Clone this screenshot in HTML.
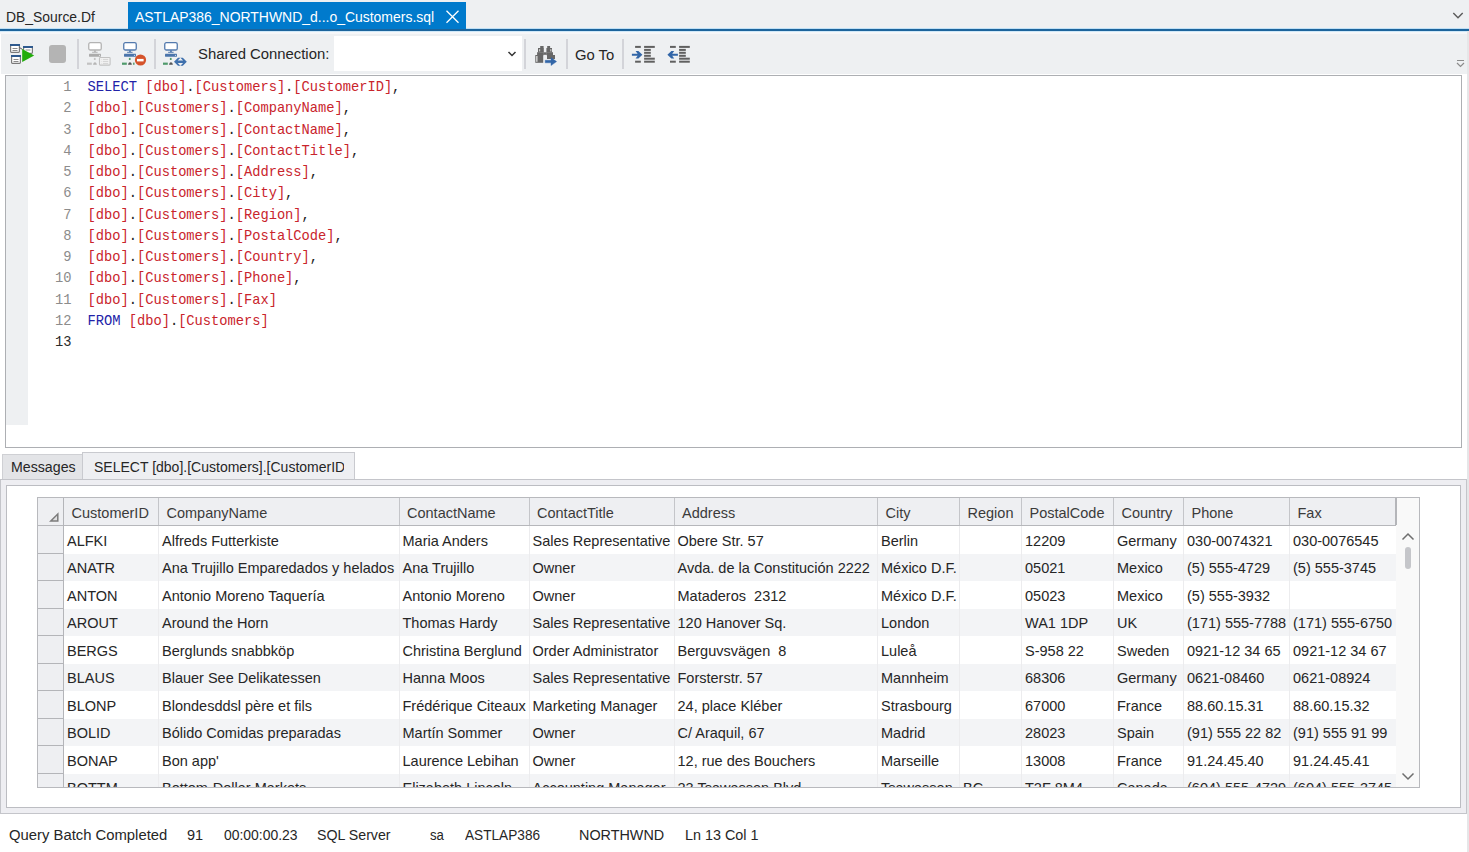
<!DOCTYPE html><html><head><meta charset="utf-8"><title>SQL Query</title><style>
html,body{margin:0;padding:0;}
body{width:1469px;height:852px;position:relative;overflow:hidden;background:#ffffff;font-family:"Liberation Sans",sans-serif;}
div{box-sizing:border-box;}
svg{display:block;}
.t{position:absolute;white-space:pre;}
</style></head><body>
<div style="position:absolute;left:0px;top:0px;width:1469px;height:29px;background:#eef0f2;"></div>
<div style="position:absolute;left:0px;top:28px;width:1469px;height:1px;background:#bfe0f6;"></div>
<div class="t" id="x1" style="left:6.00px;top:9px;height:15px;font-size:15.5px;line-height:15.5px;color:#262626;font-family:'Liberation Sans',sans-serif;transform:scaleX(0.8970);transform-origin:0 0;">DB_Source.Df</div>
<div style="position:absolute;left:128px;top:2px;width:338px;height:27px;background:#007acc;"></div>
<div class="t" id="x2" style="left:135.00px;top:9px;height:15px;font-size:15.5px;line-height:15.5px;color:#ffffff;font-family:'Liberation Sans',sans-serif;transform:scaleX(0.9003);transform-origin:0 0;">ASTLAP386_NORTHWND_d...o_Customers.sql</div>
<svg style="position:absolute;left:445px;top:10px" width="15" height="14" viewBox="0 0 15 14"><path d="M1.5 0.8 L13.5 12.8 M13.5 0.8 L1.5 12.8" stroke="#ffffff" stroke-width="1.3" fill="none"/></svg>
<svg style="position:absolute;left:1452px;top:11px" width="12" height="9" viewBox="0 0 12 9"><path d="M1.3 2 L6 6.8 L10.7 2" stroke="#5a5a5a" stroke-width="1.4" fill="none"/></svg>
<div style="position:absolute;left:0px;top:29px;width:1469px;height:2px;background:#1c649c;"></div>
<div style="position:absolute;left:0px;top:31px;width:1469px;height:1px;background:#cfe8f8;"></div>
<div style="position:absolute;left:0px;top:32px;width:1469px;height:2px;background:#f6f7f9;"></div>
<div style="position:absolute;left:1467px;top:31px;width:2px;height:821px;background:#e6e6e8;"></div>
<div style="position:absolute;left:1px;top:34px;width:1466px;height:40px;background:#eef0f2;"></div>
<svg style="position:absolute;left:9px;top:43px" width="27" height="22" viewBox="0 0 27 22">
<g fill="#fff" stroke="#7a7a7a" stroke-width="1.2">
<rect x="1.6" y="1.6" width="8.8" height="7.8" rx="0.8"/>
<rect x="14.6" y="3.6" width="8.8" height="6.8" rx="0.8"/>
<rect x="2.6" y="12.6" width="8.8" height="7.8" rx="0.8"/>
</g>
<g fill="#2f5a8e"><rect x="1" y="1" width="10" height="2"/><rect x="14" y="3" width="10" height="2"/><rect x="2" y="12" width="10" height="2"/></g>
<g stroke="#8a8a8a" stroke-width="1"><path d="M3.5 5.5h5M3.5 7.5h5M16.5 7h5M4.5 16.5h5M4.5 18.5h5"/></g>
<path d="M10.5 4.5 L13.5 6.5" stroke="#555" stroke-width="1"/>
<path d="M13.2 6 L25.2 12.5 L13.2 19 Z" fill="#22ad0c"/>
</svg>
<div style="position:absolute;left:49px;top:45px;width:17px;height:17.5px;background:#b4b4b4;border-radius:3px"></div>
<div style="position:absolute;left:76.5px;top:39px;width:2px;height:30px;background:#d3d4d9;"></div>
<div style="position:absolute;left:153.5px;top:39px;width:2px;height:30px;background:#d3d4d9;"></div>
<div style="position:absolute;left:523.5px;top:39px;width:2px;height:30px;background:#d3d4d9;"></div>
<div style="position:absolute;left:565.5px;top:39px;width:2px;height:30px;background:#d3d4d9;"></div>
<div style="position:absolute;left:621.5px;top:39px;width:2px;height:30px;background:#d3d4d9;"></div>
<svg style="position:absolute;left:83px;top:38px" width="32" height="30" viewBox="0 0 32 30"><rect x="5.75" y="4.65" width="12.5" height="7.35" rx="1.6" fill="#ffffff" stroke="#b3b3b3" stroke-width="1.3"/><rect x="11" y="12.3" width="1.9" height="1.6" fill="#b3b3b3"/><rect x="9.1" y="13.8" width="5.5" height="1" fill="#b3b3b3"/><rect x="6" y="15.8" width="12" height="2.9" rx="0.4" fill="#ababab"/><circle cx="16.5" cy="17.3" r="0.6" fill="#ffffff" opacity="0.8"/><rect x="10.9" y="19.9" width="1.7" height="2.1" fill="#c2c2c2"/><rect x="4" y="24.6" width="4.8" height="2.2" fill="#c2c2c2"/><path d="M10 26.8 L10.6 25 Q11.95 23.4 13.3 25 L13.9 26.8 Z" fill="#b5b5b5"/><rect x="16.5" y="19.5" width="10.6" height="7.6" rx="0.8" fill="#f3f3f3" stroke="#c2c2c2" stroke-width="1.1"/><path d="M20 21.4h5.2M20 23.4h5.2M20 25.4h5.2" stroke="#c9c9c9" stroke-width="0.8"/><path d="M18.4 21.4h0.8M18.4 23.4h0.8M18.4 25.4h0.8" stroke="#d5d5d5" stroke-width="0.8"/></svg>
<svg style="position:absolute;left:118px;top:38px" width="32" height="30" viewBox="0 0 32 30"><rect x="5.75" y="4.65" width="12.5" height="7.35" rx="1.6" fill="#ffffff" stroke="#5279ad" stroke-width="1.3"/><rect x="11" y="12.3" width="1.9" height="1.6" fill="#5279ad"/><rect x="9.1" y="13.8" width="5.5" height="1" fill="#5279ad"/><rect x="6" y="15.8" width="12" height="2.9" rx="0.4" fill="#4a74ab"/><circle cx="16.5" cy="17.3" r="0.6" fill="#ffffff" opacity="0.8"/><rect x="10.9" y="19.9" width="1.7" height="2.1" fill="#4f9a6b"/><rect x="4" y="24.6" width="4.8" height="2.2" fill="#4f9a6b"/><path d="M10 26.8 L10.6 25 Q11.95 23.4 13.3 25 L13.9 26.8 Z" fill="#555555"/><rect x="15.1" y="24.6" width="1.4" height="2.2" fill="#4f9a6b"/><circle cx="22.5" cy="22" r="5.6" fill="#d5532b"/><rect x="19" y="20.9" width="6.6" height="2.5" fill="#ffffff"/></svg>
<svg style="position:absolute;left:159px;top:38px" width="32" height="30" viewBox="0 0 32 30"><rect x="5.75" y="4.65" width="12.5" height="7.35" rx="1.6" fill="#ffffff" stroke="#5279ad" stroke-width="1.3"/><rect x="11" y="12.3" width="1.9" height="1.6" fill="#5279ad"/><rect x="9.1" y="13.8" width="5.5" height="1" fill="#5279ad"/><rect x="6" y="15.8" width="12" height="2.9" rx="0.4" fill="#4a74ab"/><circle cx="16.5" cy="17.3" r="0.6" fill="#ffffff" opacity="0.8"/><rect x="10.9" y="19.9" width="1.7" height="2.1" fill="#4f9a6b"/><rect x="4" y="24.6" width="4.8" height="2.2" fill="#4f9a6b"/><path d="M10 26.8 L10.6 25 Q11.95 23.4 13.3 25 L13.9 26.8 Z" fill="#555555"/><path d="M15 23.75 L19 19.7 L21.4 19.7 L18.7 22.6 H24.1 L21.4 19.7 H23.8 L27.8 23.75 L23.8 27.8 H21.4 L24.1 24.9 H18.7 L21.4 27.8 H19 Z" fill="#3f70ad"/></svg>
<div class="t" id="x3" style="left:198.00px;top:46px;height:15px;font-size:15.5px;line-height:15.5px;color:#262626;font-family:'Liberation Sans',sans-serif;transform:scaleX(0.9585);transform-origin:0 0;">Shared Connection:</div>
<div style="position:absolute;left:334px;top:36px;width:188px;height:35px;background:#ffffff;"></div>
<svg style="position:absolute;left:507px;top:50px" width="10" height="8" viewBox="0 0 10 8"><path d="M1.5 2 L5 5.5 L8.5 2" stroke="#333" stroke-width="1.5" fill="none"/></svg>
<svg style="position:absolute;left:530px;top:40px" width="32" height="28" viewBox="0 0 32 28">
<g fill="#676767">
<rect x="10.2" y="6" width="3.4" height="2.2"/>
<rect x="8" y="8" width="5.8" height="4.3"/>
<rect x="7.1" y="12.2" width="6.7" height="3"/>
<rect x="5.3" y="15" width="7.9" height="7.8"/>
<rect x="17.2" y="6" width="2.9" height="2.2"/>
<rect x="16.4" y="8" width="5.6" height="4.3"/>
<rect x="16.4" y="12.2" width="6.6" height="3"/>
<rect x="17" y="15" width="8" height="4"/>
<rect x="13.6" y="12.3" width="3" height="2.5"/>
</g>
<g fill="#c9c9c9"><rect x="6" y="16" width="1.6" height="5.8"/><rect x="9" y="9.2" width="1.2" height="2.2"/><rect x="20.2" y="9.2" width="1.2" height="2.2"/></g>
<path d="M15.2 20.3 H21 V17.6 L26.6 21.6 L21 25.6 V22.8 H15.2 Z" fill="#3266a8" stroke="#3266a8" stroke-width="0.4" stroke-linejoin="round"/>
</svg>
<div class="t" id="x4" style="left:575.00px;top:47px;height:15px;font-size:15.5px;line-height:15.5px;color:#262626;font-family:'Liberation Sans',sans-serif;transform:scaleX(0.9553);transform-origin:0 0;">Go To</div>
<svg style="position:absolute;left:628px;top:40px" width="32" height="28" viewBox="0 0 32 28">
<g fill="#606060"><rect x="7.1" y="5.9" width="5.7" height="2"/><rect x="7.1" y="20.7" width="5.7" height="2"/>
<rect x="16.1" y="5.9" width="10.7" height="2"/><rect x="16.1" y="8.9" width="6.7" height="2"/><rect x="16.1" y="11.8" width="6.7" height="2"/><rect x="16.1" y="14.8" width="6.7" height="2"/><rect x="16.1" y="17.7" width="10.7" height="2"/><rect x="16.1" y="20.7" width="10.7" height="2"/></g>
<path d="M3.9 13.8 H9.6 L7.6 11 H10.4 L14.4 14.8 L10.4 18.6 H7.6 L9.6 15.8 H3.9 Z" fill="#3266a8"/>
</svg>
<svg style="position:absolute;left:662px;top:40px" width="32" height="28" viewBox="0 0 32 28">
<g fill="#606060"><rect x="8" y="5.9" width="5.8" height="2"/><rect x="8" y="20.7" width="5.8" height="2"/>
<rect x="17.1" y="5.9" width="10.7" height="2"/><rect x="17.1" y="8.9" width="6.7" height="2"/><rect x="17.1" y="11.8" width="6.7" height="2"/><rect x="17.1" y="14.8" width="6.7" height="2"/><rect x="17.1" y="17.7" width="10.7" height="2"/><rect x="17.1" y="20.7" width="10.7" height="2"/></g>
<path d="M15.9 13.8 H10.2 L12.2 11 H9.4 L5.4 14.8 L9.4 18.6 H12.2 L10.2 15.8 H15.9 Z" fill="#3266a8"/>
</svg>
<svg style="position:absolute;left:1456px;top:59px" width="9" height="10" viewBox="0 0 9 10"><rect x="1" y="1" width="7" height="1" fill="#8c8c8c"/><path d="M1 4 L4.5 7.5 L8 4" stroke="#8c8c8c" stroke-width="1.2" fill="none"/></svg>
<div style="position:absolute;left:5px;top:75px;width:457px;height:0px;background:transparent;"></div>
<div style="position:absolute;left:5px;top:75px;width:1457px;height:373px;border:1px solid #adafb3;background:#fff"></div>
<div style="position:absolute;left:6px;top:76px;width:22px;height:349px;background:#eef0f2;"></div>
<div class="t" id="x5" style="left:63.27px;top:81px;height:13px;font-size:13.75px;line-height:13.75px;color:#8c8c8c;font-family:'Liberation Mono',monospace;letter-spacing:-0.020px">1</div>
<div class="t" id="x6" style="left:87.60px;top:81px;height:13px;font-size:13.75px;line-height:13.75px;color:#2222a8;font-family:'Liberation Mono',monospace;letter-spacing:-0.020px">SELECT </div>
<div class="t" id="x7" style="left:145.21px;top:81px;height:13px;font-size:13.75px;line-height:13.75px;color:#c9242c;font-family:'Liberation Mono',monospace;letter-spacing:-0.020px">[dbo]</div>
<div class="t" id="x8" style="left:186.36px;top:81px;height:13px;font-size:13.75px;line-height:13.75px;color:#222;font-family:'Liberation Mono',monospace;letter-spacing:-0.020px">.</div>
<div class="t" id="x9" style="left:194.59px;top:81px;height:13px;font-size:13.75px;line-height:13.75px;color:#c9242c;font-family:'Liberation Mono',monospace;letter-spacing:-0.020px">[Customers]</div>
<div class="t" id="x10" style="left:285.12px;top:81px;height:13px;font-size:13.75px;line-height:13.75px;color:#222;font-family:'Liberation Mono',monospace;letter-spacing:-0.020px">.</div>
<div class="t" id="x11" style="left:293.35px;top:81px;height:13px;font-size:13.75px;line-height:13.75px;color:#c9242c;font-family:'Liberation Mono',monospace;letter-spacing:-0.020px">[CustomerID]</div>
<div class="t" id="x12" style="left:392.11px;top:81px;height:13px;font-size:13.75px;line-height:13.75px;color:#222;font-family:'Liberation Mono',monospace;letter-spacing:-0.020px">,</div>
<div class="t" id="x13" style="left:63.27px;top:102px;height:13px;font-size:13.75px;line-height:13.75px;color:#8c8c8c;font-family:'Liberation Mono',monospace;letter-spacing:-0.020px">2</div>
<div class="t" id="x14" style="left:87.60px;top:102px;height:13px;font-size:13.75px;line-height:13.75px;color:#c9242c;font-family:'Liberation Mono',monospace;letter-spacing:-0.020px">[dbo]</div>
<div class="t" id="x15" style="left:128.75px;top:102px;height:13px;font-size:13.75px;line-height:13.75px;color:#222;font-family:'Liberation Mono',monospace;letter-spacing:-0.020px">.</div>
<div class="t" id="x16" style="left:136.98px;top:102px;height:13px;font-size:13.75px;line-height:13.75px;color:#c9242c;font-family:'Liberation Mono',monospace;letter-spacing:-0.020px">[Customers]</div>
<div class="t" id="x17" style="left:227.51px;top:102px;height:13px;font-size:13.75px;line-height:13.75px;color:#222;font-family:'Liberation Mono',monospace;letter-spacing:-0.020px">.</div>
<div class="t" id="x18" style="left:235.74px;top:102px;height:13px;font-size:13.75px;line-height:13.75px;color:#c9242c;font-family:'Liberation Mono',monospace;letter-spacing:-0.020px">[CompanyName]</div>
<div class="t" id="x19" style="left:342.73px;top:102px;height:13px;font-size:13.75px;line-height:13.75px;color:#222;font-family:'Liberation Mono',monospace;letter-spacing:-0.020px">,</div>
<div class="t" id="x20" style="left:63.27px;top:124px;height:13px;font-size:13.75px;line-height:13.75px;color:#8c8c8c;font-family:'Liberation Mono',monospace;letter-spacing:-0.020px">3</div>
<div class="t" id="x21" style="left:87.60px;top:124px;height:13px;font-size:13.75px;line-height:13.75px;color:#c9242c;font-family:'Liberation Mono',monospace;letter-spacing:-0.020px">[dbo]</div>
<div class="t" id="x22" style="left:128.75px;top:124px;height:13px;font-size:13.75px;line-height:13.75px;color:#222;font-family:'Liberation Mono',monospace;letter-spacing:-0.020px">.</div>
<div class="t" id="x23" style="left:136.98px;top:124px;height:13px;font-size:13.75px;line-height:13.75px;color:#c9242c;font-family:'Liberation Mono',monospace;letter-spacing:-0.020px">[Customers]</div>
<div class="t" id="x24" style="left:227.51px;top:124px;height:13px;font-size:13.75px;line-height:13.75px;color:#222;font-family:'Liberation Mono',monospace;letter-spacing:-0.020px">.</div>
<div class="t" id="x25" style="left:235.74px;top:124px;height:13px;font-size:13.75px;line-height:13.75px;color:#c9242c;font-family:'Liberation Mono',monospace;letter-spacing:-0.020px">[ContactName]</div>
<div class="t" id="x26" style="left:342.73px;top:124px;height:13px;font-size:13.75px;line-height:13.75px;color:#222;font-family:'Liberation Mono',monospace;letter-spacing:-0.020px">,</div>
<div class="t" id="x27" style="left:63.27px;top:145px;height:13px;font-size:13.75px;line-height:13.75px;color:#8c8c8c;font-family:'Liberation Mono',monospace;letter-spacing:-0.020px">4</div>
<div class="t" id="x28" style="left:87.60px;top:145px;height:13px;font-size:13.75px;line-height:13.75px;color:#c9242c;font-family:'Liberation Mono',monospace;letter-spacing:-0.020px">[dbo]</div>
<div class="t" id="x29" style="left:128.75px;top:145px;height:13px;font-size:13.75px;line-height:13.75px;color:#222;font-family:'Liberation Mono',monospace;letter-spacing:-0.020px">.</div>
<div class="t" id="x30" style="left:136.98px;top:145px;height:13px;font-size:13.75px;line-height:13.75px;color:#c9242c;font-family:'Liberation Mono',monospace;letter-spacing:-0.020px">[Customers]</div>
<div class="t" id="x31" style="left:227.51px;top:145px;height:13px;font-size:13.75px;line-height:13.75px;color:#222;font-family:'Liberation Mono',monospace;letter-spacing:-0.020px">.</div>
<div class="t" id="x32" style="left:235.74px;top:145px;height:13px;font-size:13.75px;line-height:13.75px;color:#c9242c;font-family:'Liberation Mono',monospace;letter-spacing:-0.020px">[ContactTitle]</div>
<div class="t" id="x33" style="left:350.96px;top:145px;height:13px;font-size:13.75px;line-height:13.75px;color:#222;font-family:'Liberation Mono',monospace;letter-spacing:-0.020px">,</div>
<div class="t" id="x34" style="left:63.27px;top:166px;height:13px;font-size:13.75px;line-height:13.75px;color:#8c8c8c;font-family:'Liberation Mono',monospace;letter-spacing:-0.020px">5</div>
<div class="t" id="x35" style="left:87.60px;top:166px;height:13px;font-size:13.75px;line-height:13.75px;color:#c9242c;font-family:'Liberation Mono',monospace;letter-spacing:-0.020px">[dbo]</div>
<div class="t" id="x36" style="left:128.75px;top:166px;height:13px;font-size:13.75px;line-height:13.75px;color:#222;font-family:'Liberation Mono',monospace;letter-spacing:-0.020px">.</div>
<div class="t" id="x37" style="left:136.98px;top:166px;height:13px;font-size:13.75px;line-height:13.75px;color:#c9242c;font-family:'Liberation Mono',monospace;letter-spacing:-0.020px">[Customers]</div>
<div class="t" id="x38" style="left:227.51px;top:166px;height:13px;font-size:13.75px;line-height:13.75px;color:#222;font-family:'Liberation Mono',monospace;letter-spacing:-0.020px">.</div>
<div class="t" id="x39" style="left:235.74px;top:166px;height:13px;font-size:13.75px;line-height:13.75px;color:#c9242c;font-family:'Liberation Mono',monospace;letter-spacing:-0.020px">[Address]</div>
<div class="t" id="x40" style="left:309.81px;top:166px;height:13px;font-size:13.75px;line-height:13.75px;color:#222;font-family:'Liberation Mono',monospace;letter-spacing:-0.020px">,</div>
<div class="t" id="x41" style="left:63.27px;top:187px;height:13px;font-size:13.75px;line-height:13.75px;color:#8c8c8c;font-family:'Liberation Mono',monospace;letter-spacing:-0.020px">6</div>
<div class="t" id="x42" style="left:87.60px;top:187px;height:13px;font-size:13.75px;line-height:13.75px;color:#c9242c;font-family:'Liberation Mono',monospace;letter-spacing:-0.020px">[dbo]</div>
<div class="t" id="x43" style="left:128.75px;top:187px;height:13px;font-size:13.75px;line-height:13.75px;color:#222;font-family:'Liberation Mono',monospace;letter-spacing:-0.020px">.</div>
<div class="t" id="x44" style="left:136.98px;top:187px;height:13px;font-size:13.75px;line-height:13.75px;color:#c9242c;font-family:'Liberation Mono',monospace;letter-spacing:-0.020px">[Customers]</div>
<div class="t" id="x45" style="left:227.51px;top:187px;height:13px;font-size:13.75px;line-height:13.75px;color:#222;font-family:'Liberation Mono',monospace;letter-spacing:-0.020px">.</div>
<div class="t" id="x46" style="left:235.74px;top:187px;height:13px;font-size:13.75px;line-height:13.75px;color:#c9242c;font-family:'Liberation Mono',monospace;letter-spacing:-0.020px">[City]</div>
<div class="t" id="x47" style="left:285.12px;top:187px;height:13px;font-size:13.75px;line-height:13.75px;color:#222;font-family:'Liberation Mono',monospace;letter-spacing:-0.020px">,</div>
<div class="t" id="x48" style="left:63.27px;top:209px;height:13px;font-size:13.75px;line-height:13.75px;color:#8c8c8c;font-family:'Liberation Mono',monospace;letter-spacing:-0.020px">7</div>
<div class="t" id="x49" style="left:87.60px;top:209px;height:13px;font-size:13.75px;line-height:13.75px;color:#c9242c;font-family:'Liberation Mono',monospace;letter-spacing:-0.020px">[dbo]</div>
<div class="t" id="x50" style="left:128.75px;top:209px;height:13px;font-size:13.75px;line-height:13.75px;color:#222;font-family:'Liberation Mono',monospace;letter-spacing:-0.020px">.</div>
<div class="t" id="x51" style="left:136.98px;top:209px;height:13px;font-size:13.75px;line-height:13.75px;color:#c9242c;font-family:'Liberation Mono',monospace;letter-spacing:-0.020px">[Customers]</div>
<div class="t" id="x52" style="left:227.51px;top:209px;height:13px;font-size:13.75px;line-height:13.75px;color:#222;font-family:'Liberation Mono',monospace;letter-spacing:-0.020px">.</div>
<div class="t" id="x53" style="left:235.74px;top:209px;height:13px;font-size:13.75px;line-height:13.75px;color:#c9242c;font-family:'Liberation Mono',monospace;letter-spacing:-0.020px">[Region]</div>
<div class="t" id="x54" style="left:301.58px;top:209px;height:13px;font-size:13.75px;line-height:13.75px;color:#222;font-family:'Liberation Mono',monospace;letter-spacing:-0.020px">,</div>
<div class="t" id="x55" style="left:63.27px;top:230px;height:13px;font-size:13.75px;line-height:13.75px;color:#8c8c8c;font-family:'Liberation Mono',monospace;letter-spacing:-0.020px">8</div>
<div class="t" id="x56" style="left:87.60px;top:230px;height:13px;font-size:13.75px;line-height:13.75px;color:#c9242c;font-family:'Liberation Mono',monospace;letter-spacing:-0.020px">[dbo]</div>
<div class="t" id="x57" style="left:128.75px;top:230px;height:13px;font-size:13.75px;line-height:13.75px;color:#222;font-family:'Liberation Mono',monospace;letter-spacing:-0.020px">.</div>
<div class="t" id="x58" style="left:136.98px;top:230px;height:13px;font-size:13.75px;line-height:13.75px;color:#c9242c;font-family:'Liberation Mono',monospace;letter-spacing:-0.020px">[Customers]</div>
<div class="t" id="x59" style="left:227.51px;top:230px;height:13px;font-size:13.75px;line-height:13.75px;color:#222;font-family:'Liberation Mono',monospace;letter-spacing:-0.020px">.</div>
<div class="t" id="x60" style="left:235.74px;top:230px;height:13px;font-size:13.75px;line-height:13.75px;color:#c9242c;font-family:'Liberation Mono',monospace;letter-spacing:-0.020px">[PostalCode]</div>
<div class="t" id="x61" style="left:334.50px;top:230px;height:13px;font-size:13.75px;line-height:13.75px;color:#222;font-family:'Liberation Mono',monospace;letter-spacing:-0.020px">,</div>
<div class="t" id="x62" style="left:63.27px;top:251px;height:13px;font-size:13.75px;line-height:13.75px;color:#8c8c8c;font-family:'Liberation Mono',monospace;letter-spacing:-0.020px">9</div>
<div class="t" id="x63" style="left:87.60px;top:251px;height:13px;font-size:13.75px;line-height:13.75px;color:#c9242c;font-family:'Liberation Mono',monospace;letter-spacing:-0.020px">[dbo]</div>
<div class="t" id="x64" style="left:128.75px;top:251px;height:13px;font-size:13.75px;line-height:13.75px;color:#222;font-family:'Liberation Mono',monospace;letter-spacing:-0.020px">.</div>
<div class="t" id="x65" style="left:136.98px;top:251px;height:13px;font-size:13.75px;line-height:13.75px;color:#c9242c;font-family:'Liberation Mono',monospace;letter-spacing:-0.020px">[Customers]</div>
<div class="t" id="x66" style="left:227.51px;top:251px;height:13px;font-size:13.75px;line-height:13.75px;color:#222;font-family:'Liberation Mono',monospace;letter-spacing:-0.020px">.</div>
<div class="t" id="x67" style="left:235.74px;top:251px;height:13px;font-size:13.75px;line-height:13.75px;color:#c9242c;font-family:'Liberation Mono',monospace;letter-spacing:-0.020px">[Country]</div>
<div class="t" id="x68" style="left:309.81px;top:251px;height:13px;font-size:13.75px;line-height:13.75px;color:#222;font-family:'Liberation Mono',monospace;letter-spacing:-0.020px">,</div>
<div class="t" id="x69" style="left:55.04px;top:272px;height:13px;font-size:13.75px;line-height:13.75px;color:#8c8c8c;font-family:'Liberation Mono',monospace;letter-spacing:-0.020px">10</div>
<div class="t" id="x70" style="left:87.60px;top:272px;height:13px;font-size:13.75px;line-height:13.75px;color:#c9242c;font-family:'Liberation Mono',monospace;letter-spacing:-0.020px">[dbo]</div>
<div class="t" id="x71" style="left:128.75px;top:272px;height:13px;font-size:13.75px;line-height:13.75px;color:#222;font-family:'Liberation Mono',monospace;letter-spacing:-0.020px">.</div>
<div class="t" id="x72" style="left:136.98px;top:272px;height:13px;font-size:13.75px;line-height:13.75px;color:#c9242c;font-family:'Liberation Mono',monospace;letter-spacing:-0.020px">[Customers]</div>
<div class="t" id="x73" style="left:227.51px;top:272px;height:13px;font-size:13.75px;line-height:13.75px;color:#222;font-family:'Liberation Mono',monospace;letter-spacing:-0.020px">.</div>
<div class="t" id="x74" style="left:235.74px;top:272px;height:13px;font-size:13.75px;line-height:13.75px;color:#c9242c;font-family:'Liberation Mono',monospace;letter-spacing:-0.020px">[Phone]</div>
<div class="t" id="x75" style="left:293.35px;top:272px;height:13px;font-size:13.75px;line-height:13.75px;color:#222;font-family:'Liberation Mono',monospace;letter-spacing:-0.020px">,</div>
<div class="t" id="x76" style="left:55.04px;top:294px;height:13px;font-size:13.75px;line-height:13.75px;color:#8c8c8c;font-family:'Liberation Mono',monospace;letter-spacing:-0.020px">11</div>
<div class="t" id="x77" style="left:87.60px;top:294px;height:13px;font-size:13.75px;line-height:13.75px;color:#c9242c;font-family:'Liberation Mono',monospace;letter-spacing:-0.020px">[dbo]</div>
<div class="t" id="x78" style="left:128.75px;top:294px;height:13px;font-size:13.75px;line-height:13.75px;color:#222;font-family:'Liberation Mono',monospace;letter-spacing:-0.020px">.</div>
<div class="t" id="x79" style="left:136.98px;top:294px;height:13px;font-size:13.75px;line-height:13.75px;color:#c9242c;font-family:'Liberation Mono',monospace;letter-spacing:-0.020px">[Customers]</div>
<div class="t" id="x80" style="left:227.51px;top:294px;height:13px;font-size:13.75px;line-height:13.75px;color:#222;font-family:'Liberation Mono',monospace;letter-spacing:-0.020px">.</div>
<div class="t" id="x81" style="left:235.74px;top:294px;height:13px;font-size:13.75px;line-height:13.75px;color:#c9242c;font-family:'Liberation Mono',monospace;letter-spacing:-0.020px">[Fax]</div>
<div class="t" id="x82" style="left:55.04px;top:315px;height:13px;font-size:13.75px;line-height:13.75px;color:#8c8c8c;font-family:'Liberation Mono',monospace;letter-spacing:-0.020px">12</div>
<div class="t" id="x83" style="left:87.60px;top:315px;height:13px;font-size:13.75px;line-height:13.75px;color:#2222a8;font-family:'Liberation Mono',monospace;letter-spacing:-0.020px">FROM </div>
<div class="t" id="x84" style="left:128.75px;top:315px;height:13px;font-size:13.75px;line-height:13.75px;color:#c9242c;font-family:'Liberation Mono',monospace;letter-spacing:-0.020px">[dbo]</div>
<div class="t" id="x85" style="left:169.90px;top:315px;height:13px;font-size:13.75px;line-height:13.75px;color:#222;font-family:'Liberation Mono',monospace;letter-spacing:-0.020px">.</div>
<div class="t" id="x86" style="left:178.13px;top:315px;height:13px;font-size:13.75px;line-height:13.75px;color:#c9242c;font-family:'Liberation Mono',monospace;letter-spacing:-0.020px">[Customers]</div>
<div class="t" id="x87" style="left:55.04px;top:336px;height:13px;font-size:13.75px;line-height:13.75px;color:#2b2b2b;font-family:'Liberation Mono',monospace;letter-spacing:-0.020px">13</div>
<div style="position:absolute;left:2px;top:454px;width:81px;height:26px;background:#e3e4e7;border:1px solid #cfd0d4;border-bottom:none"></div>
<div style="position:absolute;left:82px;top:452px;width:273px;height:28px;background:#eeeff2;border:1px solid #c9cacf;border-bottom:none"></div>
<div class="t" id="x88" style="left:11.00px;top:459px;height:15px;font-size:15.5px;line-height:15.5px;color:#262626;font-family:'Liberation Sans',sans-serif;transform:scaleX(0.9146);transform-origin:0 0;">Messages</div>
<div style="position:absolute;left:0;top:0;width:261px;height:27px;left:83px;top:453px;overflow:hidden"><div class="t" id="x89" style="left:94.30px;top:459px;height:15px;font-size:15px;line-height:15px;color:#262626;font-family:'Liberation Sans',sans-serif;transform:scaleX(0.9340);transform-origin:0 0;;left:11.30px;top:6px">SELECT [dbo].[Customers].[CustomerID]</div></div>
<div style="position:absolute;left:0px;top:479px;width:1467px;height:335px;background:#eeeef2;border:1px solid #c4c5ca"></div>
<div style="position:absolute;left:6px;top:485px;width:1455px;height:323px;background:#fff;border:1px solid #bcbdc2"></div>
<div style="position:absolute;left:37px;top:497px;width:1383px;height:291px;background:#f9f9f9;border:1px solid #b8b9bd"></div>
<div style="position:absolute;left:64px;top:526px;width:1332px;height:28px;background:#ffffff"></div>
<div style="position:absolute;left:64px;top:554px;width:1332px;height:27px;background:#f3f4f6"></div>
<div style="position:absolute;left:64px;top:581px;width:1332px;height:28px;background:#ffffff"></div>
<div style="position:absolute;left:64px;top:609px;width:1332px;height:27px;background:#f3f4f6"></div>
<div style="position:absolute;left:64px;top:636px;width:1332px;height:28px;background:#ffffff"></div>
<div style="position:absolute;left:64px;top:664px;width:1332px;height:27px;background:#f3f4f6"></div>
<div style="position:absolute;left:64px;top:691px;width:1332px;height:28px;background:#ffffff"></div>
<div style="position:absolute;left:64px;top:719px;width:1332px;height:27px;background:#f3f4f6"></div>
<div style="position:absolute;left:64px;top:746px;width:1332px;height:28px;background:#ffffff"></div>
<div style="position:absolute;left:64px;top:774px;width:1332px;height:13px;background:#f3f4f6"></div>
<div style="position:absolute;left:38px;top:498px;width:25.5px;height:289px;background:#eeeff2;"></div>
<div style="position:absolute;left:38px;top:498px;width:1358px;height:27px;background:#eeeff2;"></div>
<div style="position:absolute;left:38px;top:525px;width:1358px;height:1px;background:#b6b7bb;"></div>
<div style="position:absolute;left:38px;top:553px;width:25.5px;height:1px;background:#b4b5b9"></div>
<div style="position:absolute;left:38px;top:580px;width:25.5px;height:1px;background:#b4b5b9"></div>
<div style="position:absolute;left:38px;top:608px;width:25.5px;height:1px;background:#b4b5b9"></div>
<div style="position:absolute;left:38px;top:635px;width:25.5px;height:1px;background:#b4b5b9"></div>
<div style="position:absolute;left:38px;top:663px;width:25.5px;height:1px;background:#b4b5b9"></div>
<div style="position:absolute;left:38px;top:690px;width:25.5px;height:1px;background:#b4b5b9"></div>
<div style="position:absolute;left:38px;top:718px;width:25.5px;height:1px;background:#b4b5b9"></div>
<div style="position:absolute;left:38px;top:745px;width:25.5px;height:1px;background:#b4b5b9"></div>
<div style="position:absolute;left:38px;top:773px;width:25.5px;height:1px;background:#b4b5b9"></div>
<div style="position:absolute;left:63.0px;top:498px;width:1px;height:289px;background:#b4b5b9"></div>
<div style="position:absolute;left:158.0px;top:498px;width:1px;height:27px;background:#c4c5c9"></div>
<div style="position:absolute;left:158.0px;top:526px;width:1px;height:261px;background:#ececee"></div>
<div style="position:absolute;left:398.5px;top:498px;width:1px;height:27px;background:#c4c5c9"></div>
<div style="position:absolute;left:398.5px;top:526px;width:1px;height:261px;background:#ececee"></div>
<div style="position:absolute;left:528.5px;top:498px;width:1px;height:27px;background:#c4c5c9"></div>
<div style="position:absolute;left:528.5px;top:526px;width:1px;height:261px;background:#ececee"></div>
<div style="position:absolute;left:673.5px;top:498px;width:1px;height:27px;background:#c4c5c9"></div>
<div style="position:absolute;left:673.5px;top:526px;width:1px;height:261px;background:#ececee"></div>
<div style="position:absolute;left:877.0px;top:498px;width:1px;height:27px;background:#c4c5c9"></div>
<div style="position:absolute;left:877.0px;top:526px;width:1px;height:261px;background:#ececee"></div>
<div style="position:absolute;left:959.0px;top:498px;width:1px;height:27px;background:#c4c5c9"></div>
<div style="position:absolute;left:959.0px;top:526px;width:1px;height:261px;background:#ececee"></div>
<div style="position:absolute;left:1021.0px;top:498px;width:1px;height:27px;background:#c4c5c9"></div>
<div style="position:absolute;left:1021.0px;top:526px;width:1px;height:261px;background:#ececee"></div>
<div style="position:absolute;left:1113.0px;top:498px;width:1px;height:27px;background:#c4c5c9"></div>
<div style="position:absolute;left:1113.0px;top:526px;width:1px;height:261px;background:#ececee"></div>
<div style="position:absolute;left:1183.0px;top:498px;width:1px;height:27px;background:#c4c5c9"></div>
<div style="position:absolute;left:1183.0px;top:526px;width:1px;height:261px;background:#ececee"></div>
<div style="position:absolute;left:1289.0px;top:498px;width:1px;height:27px;background:#c4c5c9"></div>
<div style="position:absolute;left:1289.0px;top:526px;width:1px;height:261px;background:#ececee"></div>
<div style="position:absolute;left:1395px;top:498px;width:1.6px;height:27px;background:#b4b5b9"></div>
<svg style="position:absolute;left:49px;top:512px" width="11" height="11" viewBox="0 0 11 11"><path d="M8.8 2 L8.8 9 L1.8 9 Z" fill="#e0e0e2" stroke="#7c7c7c" stroke-width="1.5" stroke-linejoin="miter"/></svg>
<div style="position:absolute;left:0;top:0;width:94.0px;height:27px;left:64.5px;top:498px;overflow:hidden"><div class="t" id="x90" style="left:71.50px;top:506px;height:14px;font-size:14.5px;line-height:14.5px;color:#3b3b3b;font-family:'Liberation Sans',sans-serif;;left:7.00px;top:8px">CustomerID</div></div>
<div style="position:absolute;left:0;top:0;width:239.5px;height:27px;left:159.5px;top:498px;overflow:hidden"><div class="t" id="x91" style="left:166.50px;top:506px;height:14px;font-size:14.5px;line-height:14.5px;color:#3b3b3b;font-family:'Liberation Sans',sans-serif;;left:7.00px;top:8px">CompanyName</div></div>
<div style="position:absolute;left:0;top:0;width:129px;height:27px;left:400px;top:498px;overflow:hidden"><div class="t" id="x92" style="left:407.00px;top:506px;height:14px;font-size:14.5px;line-height:14.5px;color:#3b3b3b;font-family:'Liberation Sans',sans-serif;;left:7.00px;top:8px">ContactName</div></div>
<div style="position:absolute;left:0;top:0;width:144px;height:27px;left:530px;top:498px;overflow:hidden"><div class="t" id="x93" style="left:537.00px;top:506px;height:14px;font-size:14.5px;line-height:14.5px;color:#3b3b3b;font-family:'Liberation Sans',sans-serif;;left:7.00px;top:8px">ContactTitle</div></div>
<div style="position:absolute;left:0;top:0;width:202.5px;height:27px;left:675px;top:498px;overflow:hidden"><div class="t" id="x94" style="left:682.00px;top:506px;height:14px;font-size:14.5px;line-height:14.5px;color:#3b3b3b;font-family:'Liberation Sans',sans-serif;;left:7.00px;top:8px">Address</div></div>
<div style="position:absolute;left:0;top:0;width:81.0px;height:27px;left:878.5px;top:498px;overflow:hidden"><div class="t" id="x95" style="left:885.50px;top:506px;height:14px;font-size:14.5px;line-height:14.5px;color:#3b3b3b;font-family:'Liberation Sans',sans-serif;;left:7.00px;top:8px">City</div></div>
<div style="position:absolute;left:0;top:0;width:61.0px;height:27px;left:960.5px;top:498px;overflow:hidden"><div class="t" id="x96" style="left:967.50px;top:506px;height:14px;font-size:14.5px;line-height:14.5px;color:#3b3b3b;font-family:'Liberation Sans',sans-serif;;left:7.00px;top:8px">Region</div></div>
<div style="position:absolute;left:0;top:0;width:91.0px;height:27px;left:1022.5px;top:498px;overflow:hidden"><div class="t" id="x97" style="left:1029.50px;top:506px;height:14px;font-size:14.5px;line-height:14.5px;color:#3b3b3b;font-family:'Liberation Sans',sans-serif;;left:7.00px;top:8px">PostalCode</div></div>
<div style="position:absolute;left:0;top:0;width:69.0px;height:27px;left:1114.5px;top:498px;overflow:hidden"><div class="t" id="x98" style="left:1121.50px;top:506px;height:14px;font-size:14.5px;line-height:14.5px;color:#3b3b3b;font-family:'Liberation Sans',sans-serif;;left:7.00px;top:8px">Country</div></div>
<div style="position:absolute;left:0;top:0;width:105.0px;height:27px;left:1184.5px;top:498px;overflow:hidden"><div class="t" id="x99" style="left:1191.50px;top:506px;height:14px;font-size:14.5px;line-height:14.5px;color:#3b3b3b;font-family:'Liberation Sans',sans-serif;;left:7.00px;top:8px">Phone</div></div>
<div style="position:absolute;left:0;top:0;width:105.5px;height:27px;left:1290.5px;top:498px;overflow:hidden"><div class="t" id="x100" style="left:1297.50px;top:506px;height:14px;font-size:14.5px;line-height:14.5px;color:#3b3b3b;font-family:'Liberation Sans',sans-serif;;left:7.00px;top:8px">Fax</div></div>
<div style="position:absolute;left:0;top:0;width:94.5px;height:28px;left:64.0px;top:526px;overflow:hidden"><div class="t" id="x101" style="left:67.00px;top:534px;height:14px;font-size:14.5px;line-height:14.5px;color:#262626;font-family:'Liberation Sans',sans-serif;;left:3.00px;top:8px">ALFKI</div></div>
<div style="position:absolute;left:0;top:0;width:240.0px;height:28px;left:159.0px;top:526px;overflow:hidden"><div class="t" id="x102" style="left:162.00px;top:534px;height:14px;font-size:14.5px;line-height:14.5px;color:#262626;font-family:'Liberation Sans',sans-serif;;left:3.00px;top:8px">Alfreds Futterkiste</div></div>
<div style="position:absolute;left:0;top:0;width:129.5px;height:28px;left:399.5px;top:526px;overflow:hidden"><div class="t" id="x103" style="left:402.50px;top:534px;height:14px;font-size:14.5px;line-height:14.5px;color:#262626;font-family:'Liberation Sans',sans-serif;;left:3.00px;top:8px">Maria Anders</div></div>
<div style="position:absolute;left:0;top:0;width:144.5px;height:28px;left:529.5px;top:526px;overflow:hidden"><div class="t" id="x104" style="left:532.50px;top:534px;height:14px;font-size:14.5px;line-height:14.5px;color:#262626;font-family:'Liberation Sans',sans-serif;;left:3.00px;top:8px">Sales Representative</div></div>
<div style="position:absolute;left:0;top:0;width:203.0px;height:28px;left:674.5px;top:526px;overflow:hidden"><div class="t" id="x105" style="left:677.50px;top:534px;height:14px;font-size:14.5px;line-height:14.5px;color:#262626;font-family:'Liberation Sans',sans-serif;;left:3.00px;top:8px">Obere Str. 57</div></div>
<div style="position:absolute;left:0;top:0;width:81.5px;height:28px;left:878.0px;top:526px;overflow:hidden"><div class="t" id="x106" style="left:881.00px;top:534px;height:14px;font-size:14.5px;line-height:14.5px;color:#262626;font-family:'Liberation Sans',sans-serif;;left:3.00px;top:8px">Berlin</div></div>
<div style="position:absolute;left:0;top:0;width:91.5px;height:28px;left:1022.0px;top:526px;overflow:hidden"><div class="t" id="x107" style="left:1025.00px;top:534px;height:14px;font-size:14.5px;line-height:14.5px;color:#262626;font-family:'Liberation Sans',sans-serif;;left:3.00px;top:8px">12209</div></div>
<div style="position:absolute;left:0;top:0;width:69.5px;height:28px;left:1114.0px;top:526px;overflow:hidden"><div class="t" id="x108" style="left:1117.00px;top:534px;height:14px;font-size:14.5px;line-height:14.5px;color:#262626;font-family:'Liberation Sans',sans-serif;;left:3.00px;top:8px">Germany</div></div>
<div style="position:absolute;left:0;top:0;width:105.5px;height:28px;left:1184.0px;top:526px;overflow:hidden"><div class="t" id="x109" style="left:1187.00px;top:534px;height:14px;font-size:14.5px;line-height:14.5px;color:#262626;font-family:'Liberation Sans',sans-serif;;left:3.00px;top:8px">030-0074321</div></div>
<div style="position:absolute;left:0;top:0;width:106.0px;height:28px;left:1290.0px;top:526px;overflow:hidden"><div class="t" id="x110" style="left:1293.00px;top:534px;height:14px;font-size:14.5px;line-height:14.5px;color:#262626;font-family:'Liberation Sans',sans-serif;;left:3.00px;top:8px">030-0076545</div></div>
<div style="position:absolute;left:0;top:0;width:94.5px;height:27px;left:64.0px;top:554px;overflow:hidden"><div class="t" id="x111" style="left:67.00px;top:561px;height:14px;font-size:14.5px;line-height:14.5px;color:#262626;font-family:'Liberation Sans',sans-serif;;left:3.00px;top:7px">ANATR</div></div>
<div style="position:absolute;left:0;top:0;width:240.0px;height:27px;left:159.0px;top:554px;overflow:hidden"><div class="t" id="x112" style="left:162.00px;top:561px;height:14px;font-size:14.5px;line-height:14.5px;color:#262626;font-family:'Liberation Sans',sans-serif;;left:3.00px;top:7px">Ana Trujillo Emparedados y helados</div></div>
<div style="position:absolute;left:0;top:0;width:129.5px;height:27px;left:399.5px;top:554px;overflow:hidden"><div class="t" id="x113" style="left:402.50px;top:561px;height:14px;font-size:14.5px;line-height:14.5px;color:#262626;font-family:'Liberation Sans',sans-serif;;left:3.00px;top:7px">Ana Trujillo</div></div>
<div style="position:absolute;left:0;top:0;width:144.5px;height:27px;left:529.5px;top:554px;overflow:hidden"><div class="t" id="x114" style="left:532.50px;top:561px;height:14px;font-size:14.5px;line-height:14.5px;color:#262626;font-family:'Liberation Sans',sans-serif;;left:3.00px;top:7px">Owner</div></div>
<div style="position:absolute;left:0;top:0;width:203.0px;height:27px;left:674.5px;top:554px;overflow:hidden"><div class="t" id="x115" style="left:677.50px;top:561px;height:14px;font-size:14.5px;line-height:14.5px;color:#262626;font-family:'Liberation Sans',sans-serif;;left:3.00px;top:7px">Avda. de la Constitución 2222</div></div>
<div style="position:absolute;left:0;top:0;width:81.5px;height:27px;left:878.0px;top:554px;overflow:hidden"><div class="t" id="x116" style="left:881.00px;top:561px;height:14px;font-size:14.5px;line-height:14.5px;color:#262626;font-family:'Liberation Sans',sans-serif;;left:3.00px;top:7px">México D.F.</div></div>
<div style="position:absolute;left:0;top:0;width:91.5px;height:27px;left:1022.0px;top:554px;overflow:hidden"><div class="t" id="x117" style="left:1025.00px;top:561px;height:14px;font-size:14.5px;line-height:14.5px;color:#262626;font-family:'Liberation Sans',sans-serif;;left:3.00px;top:7px">05021</div></div>
<div style="position:absolute;left:0;top:0;width:69.5px;height:27px;left:1114.0px;top:554px;overflow:hidden"><div class="t" id="x118" style="left:1117.00px;top:561px;height:14px;font-size:14.5px;line-height:14.5px;color:#262626;font-family:'Liberation Sans',sans-serif;;left:3.00px;top:7px">Mexico</div></div>
<div style="position:absolute;left:0;top:0;width:105.5px;height:27px;left:1184.0px;top:554px;overflow:hidden"><div class="t" id="x119" style="left:1187.00px;top:561px;height:14px;font-size:14.5px;line-height:14.5px;color:#262626;font-family:'Liberation Sans',sans-serif;;left:3.00px;top:7px">(5) 555-4729</div></div>
<div style="position:absolute;left:0;top:0;width:106.0px;height:27px;left:1290.0px;top:554px;overflow:hidden"><div class="t" id="x120" style="left:1293.00px;top:561px;height:14px;font-size:14.5px;line-height:14.5px;color:#262626;font-family:'Liberation Sans',sans-serif;;left:3.00px;top:7px">(5) 555-3745</div></div>
<div style="position:absolute;left:0;top:0;width:94.5px;height:28px;left:64.0px;top:581px;overflow:hidden"><div class="t" id="x121" style="left:67.00px;top:589px;height:14px;font-size:14.5px;line-height:14.5px;color:#262626;font-family:'Liberation Sans',sans-serif;;left:3.00px;top:8px">ANTON</div></div>
<div style="position:absolute;left:0;top:0;width:240.0px;height:28px;left:159.0px;top:581px;overflow:hidden"><div class="t" id="x122" style="left:162.00px;top:589px;height:14px;font-size:14.5px;line-height:14.5px;color:#262626;font-family:'Liberation Sans',sans-serif;;left:3.00px;top:8px">Antonio Moreno Taquería</div></div>
<div style="position:absolute;left:0;top:0;width:129.5px;height:28px;left:399.5px;top:581px;overflow:hidden"><div class="t" id="x123" style="left:402.50px;top:589px;height:14px;font-size:14.5px;line-height:14.5px;color:#262626;font-family:'Liberation Sans',sans-serif;;left:3.00px;top:8px">Antonio Moreno</div></div>
<div style="position:absolute;left:0;top:0;width:144.5px;height:28px;left:529.5px;top:581px;overflow:hidden"><div class="t" id="x124" style="left:532.50px;top:589px;height:14px;font-size:14.5px;line-height:14.5px;color:#262626;font-family:'Liberation Sans',sans-serif;;left:3.00px;top:8px">Owner</div></div>
<div style="position:absolute;left:0;top:0;width:203.0px;height:28px;left:674.5px;top:581px;overflow:hidden"><div class="t" id="x125" style="left:677.50px;top:589px;height:14px;font-size:14.5px;line-height:14.5px;color:#262626;font-family:'Liberation Sans',sans-serif;;left:3.00px;top:8px">Mataderos  2312</div></div>
<div style="position:absolute;left:0;top:0;width:81.5px;height:28px;left:878.0px;top:581px;overflow:hidden"><div class="t" id="x126" style="left:881.00px;top:589px;height:14px;font-size:14.5px;line-height:14.5px;color:#262626;font-family:'Liberation Sans',sans-serif;;left:3.00px;top:8px">México D.F.</div></div>
<div style="position:absolute;left:0;top:0;width:91.5px;height:28px;left:1022.0px;top:581px;overflow:hidden"><div class="t" id="x127" style="left:1025.00px;top:589px;height:14px;font-size:14.5px;line-height:14.5px;color:#262626;font-family:'Liberation Sans',sans-serif;;left:3.00px;top:8px">05023</div></div>
<div style="position:absolute;left:0;top:0;width:69.5px;height:28px;left:1114.0px;top:581px;overflow:hidden"><div class="t" id="x128" style="left:1117.00px;top:589px;height:14px;font-size:14.5px;line-height:14.5px;color:#262626;font-family:'Liberation Sans',sans-serif;;left:3.00px;top:8px">Mexico</div></div>
<div style="position:absolute;left:0;top:0;width:105.5px;height:28px;left:1184.0px;top:581px;overflow:hidden"><div class="t" id="x129" style="left:1187.00px;top:589px;height:14px;font-size:14.5px;line-height:14.5px;color:#262626;font-family:'Liberation Sans',sans-serif;;left:3.00px;top:8px">(5) 555-3932</div></div>
<div style="position:absolute;left:0;top:0;width:94.5px;height:27px;left:64.0px;top:609px;overflow:hidden"><div class="t" id="x130" style="left:67.00px;top:616px;height:14px;font-size:14.5px;line-height:14.5px;color:#262626;font-family:'Liberation Sans',sans-serif;;left:3.00px;top:7px">AROUT</div></div>
<div style="position:absolute;left:0;top:0;width:240.0px;height:27px;left:159.0px;top:609px;overflow:hidden"><div class="t" id="x131" style="left:162.00px;top:616px;height:14px;font-size:14.5px;line-height:14.5px;color:#262626;font-family:'Liberation Sans',sans-serif;;left:3.00px;top:7px">Around the Horn</div></div>
<div style="position:absolute;left:0;top:0;width:129.5px;height:27px;left:399.5px;top:609px;overflow:hidden"><div class="t" id="x132" style="left:402.50px;top:616px;height:14px;font-size:14.5px;line-height:14.5px;color:#262626;font-family:'Liberation Sans',sans-serif;;left:3.00px;top:7px">Thomas Hardy</div></div>
<div style="position:absolute;left:0;top:0;width:144.5px;height:27px;left:529.5px;top:609px;overflow:hidden"><div class="t" id="x133" style="left:532.50px;top:616px;height:14px;font-size:14.5px;line-height:14.5px;color:#262626;font-family:'Liberation Sans',sans-serif;;left:3.00px;top:7px">Sales Representative</div></div>
<div style="position:absolute;left:0;top:0;width:203.0px;height:27px;left:674.5px;top:609px;overflow:hidden"><div class="t" id="x134" style="left:677.50px;top:616px;height:14px;font-size:14.5px;line-height:14.5px;color:#262626;font-family:'Liberation Sans',sans-serif;;left:3.00px;top:7px">120 Hanover Sq.</div></div>
<div style="position:absolute;left:0;top:0;width:81.5px;height:27px;left:878.0px;top:609px;overflow:hidden"><div class="t" id="x135" style="left:881.00px;top:616px;height:14px;font-size:14.5px;line-height:14.5px;color:#262626;font-family:'Liberation Sans',sans-serif;;left:3.00px;top:7px">London</div></div>
<div style="position:absolute;left:0;top:0;width:91.5px;height:27px;left:1022.0px;top:609px;overflow:hidden"><div class="t" id="x136" style="left:1025.00px;top:616px;height:14px;font-size:14.5px;line-height:14.5px;color:#262626;font-family:'Liberation Sans',sans-serif;;left:3.00px;top:7px">WA1 1DP</div></div>
<div style="position:absolute;left:0;top:0;width:69.5px;height:27px;left:1114.0px;top:609px;overflow:hidden"><div class="t" id="x137" style="left:1117.00px;top:616px;height:14px;font-size:14.5px;line-height:14.5px;color:#262626;font-family:'Liberation Sans',sans-serif;;left:3.00px;top:7px">UK</div></div>
<div style="position:absolute;left:0;top:0;width:105.5px;height:27px;left:1184.0px;top:609px;overflow:hidden"><div class="t" id="x138" style="left:1187.00px;top:616px;height:14px;font-size:14.5px;line-height:14.5px;color:#262626;font-family:'Liberation Sans',sans-serif;;left:3.00px;top:7px">(171) 555-7788</div></div>
<div style="position:absolute;left:0;top:0;width:106.0px;height:27px;left:1290.0px;top:609px;overflow:hidden"><div class="t" id="x139" style="left:1293.00px;top:616px;height:14px;font-size:14.5px;line-height:14.5px;color:#262626;font-family:'Liberation Sans',sans-serif;;left:3.00px;top:7px">(171) 555-6750</div></div>
<div style="position:absolute;left:0;top:0;width:94.5px;height:28px;left:64.0px;top:636px;overflow:hidden"><div class="t" id="x140" style="left:67.00px;top:644px;height:14px;font-size:14.5px;line-height:14.5px;color:#262626;font-family:'Liberation Sans',sans-serif;;left:3.00px;top:8px">BERGS</div></div>
<div style="position:absolute;left:0;top:0;width:240.0px;height:28px;left:159.0px;top:636px;overflow:hidden"><div class="t" id="x141" style="left:162.00px;top:644px;height:14px;font-size:14.5px;line-height:14.5px;color:#262626;font-family:'Liberation Sans',sans-serif;;left:3.00px;top:8px">Berglunds snabbköp</div></div>
<div style="position:absolute;left:0;top:0;width:129.5px;height:28px;left:399.5px;top:636px;overflow:hidden"><div class="t" id="x142" style="left:402.50px;top:644px;height:14px;font-size:14.5px;line-height:14.5px;color:#262626;font-family:'Liberation Sans',sans-serif;;left:3.00px;top:8px">Christina Berglund</div></div>
<div style="position:absolute;left:0;top:0;width:144.5px;height:28px;left:529.5px;top:636px;overflow:hidden"><div class="t" id="x143" style="left:532.50px;top:644px;height:14px;font-size:14.5px;line-height:14.5px;color:#262626;font-family:'Liberation Sans',sans-serif;;left:3.00px;top:8px">Order Administrator</div></div>
<div style="position:absolute;left:0;top:0;width:203.0px;height:28px;left:674.5px;top:636px;overflow:hidden"><div class="t" id="x144" style="left:677.50px;top:644px;height:14px;font-size:14.5px;line-height:14.5px;color:#262626;font-family:'Liberation Sans',sans-serif;;left:3.00px;top:8px">Berguvsvägen  8</div></div>
<div style="position:absolute;left:0;top:0;width:81.5px;height:28px;left:878.0px;top:636px;overflow:hidden"><div class="t" id="x145" style="left:881.00px;top:644px;height:14px;font-size:14.5px;line-height:14.5px;color:#262626;font-family:'Liberation Sans',sans-serif;;left:3.00px;top:8px">Luleå</div></div>
<div style="position:absolute;left:0;top:0;width:91.5px;height:28px;left:1022.0px;top:636px;overflow:hidden"><div class="t" id="x146" style="left:1025.00px;top:644px;height:14px;font-size:14.5px;line-height:14.5px;color:#262626;font-family:'Liberation Sans',sans-serif;;left:3.00px;top:8px">S-958 22</div></div>
<div style="position:absolute;left:0;top:0;width:69.5px;height:28px;left:1114.0px;top:636px;overflow:hidden"><div class="t" id="x147" style="left:1117.00px;top:644px;height:14px;font-size:14.5px;line-height:14.5px;color:#262626;font-family:'Liberation Sans',sans-serif;;left:3.00px;top:8px">Sweden</div></div>
<div style="position:absolute;left:0;top:0;width:105.5px;height:28px;left:1184.0px;top:636px;overflow:hidden"><div class="t" id="x148" style="left:1187.00px;top:644px;height:14px;font-size:14.5px;line-height:14.5px;color:#262626;font-family:'Liberation Sans',sans-serif;;left:3.00px;top:8px">0921-12 34 65</div></div>
<div style="position:absolute;left:0;top:0;width:106.0px;height:28px;left:1290.0px;top:636px;overflow:hidden"><div class="t" id="x149" style="left:1293.00px;top:644px;height:14px;font-size:14.5px;line-height:14.5px;color:#262626;font-family:'Liberation Sans',sans-serif;;left:3.00px;top:8px">0921-12 34 67</div></div>
<div style="position:absolute;left:0;top:0;width:94.5px;height:27px;left:64.0px;top:664px;overflow:hidden"><div class="t" id="x150" style="left:67.00px;top:671px;height:14px;font-size:14.5px;line-height:14.5px;color:#262626;font-family:'Liberation Sans',sans-serif;;left:3.00px;top:7px">BLAUS</div></div>
<div style="position:absolute;left:0;top:0;width:240.0px;height:27px;left:159.0px;top:664px;overflow:hidden"><div class="t" id="x151" style="left:162.00px;top:671px;height:14px;font-size:14.5px;line-height:14.5px;color:#262626;font-family:'Liberation Sans',sans-serif;;left:3.00px;top:7px">Blauer See Delikatessen</div></div>
<div style="position:absolute;left:0;top:0;width:129.5px;height:27px;left:399.5px;top:664px;overflow:hidden"><div class="t" id="x152" style="left:402.50px;top:671px;height:14px;font-size:14.5px;line-height:14.5px;color:#262626;font-family:'Liberation Sans',sans-serif;;left:3.00px;top:7px">Hanna Moos</div></div>
<div style="position:absolute;left:0;top:0;width:144.5px;height:27px;left:529.5px;top:664px;overflow:hidden"><div class="t" id="x153" style="left:532.50px;top:671px;height:14px;font-size:14.5px;line-height:14.5px;color:#262626;font-family:'Liberation Sans',sans-serif;;left:3.00px;top:7px">Sales Representative</div></div>
<div style="position:absolute;left:0;top:0;width:203.0px;height:27px;left:674.5px;top:664px;overflow:hidden"><div class="t" id="x154" style="left:677.50px;top:671px;height:14px;font-size:14.5px;line-height:14.5px;color:#262626;font-family:'Liberation Sans',sans-serif;;left:3.00px;top:7px">Forsterstr. 57</div></div>
<div style="position:absolute;left:0;top:0;width:81.5px;height:27px;left:878.0px;top:664px;overflow:hidden"><div class="t" id="x155" style="left:881.00px;top:671px;height:14px;font-size:14.5px;line-height:14.5px;color:#262626;font-family:'Liberation Sans',sans-serif;;left:3.00px;top:7px">Mannheim</div></div>
<div style="position:absolute;left:0;top:0;width:91.5px;height:27px;left:1022.0px;top:664px;overflow:hidden"><div class="t" id="x156" style="left:1025.00px;top:671px;height:14px;font-size:14.5px;line-height:14.5px;color:#262626;font-family:'Liberation Sans',sans-serif;;left:3.00px;top:7px">68306</div></div>
<div style="position:absolute;left:0;top:0;width:69.5px;height:27px;left:1114.0px;top:664px;overflow:hidden"><div class="t" id="x157" style="left:1117.00px;top:671px;height:14px;font-size:14.5px;line-height:14.5px;color:#262626;font-family:'Liberation Sans',sans-serif;;left:3.00px;top:7px">Germany</div></div>
<div style="position:absolute;left:0;top:0;width:105.5px;height:27px;left:1184.0px;top:664px;overflow:hidden"><div class="t" id="x158" style="left:1187.00px;top:671px;height:14px;font-size:14.5px;line-height:14.5px;color:#262626;font-family:'Liberation Sans',sans-serif;;left:3.00px;top:7px">0621-08460</div></div>
<div style="position:absolute;left:0;top:0;width:106.0px;height:27px;left:1290.0px;top:664px;overflow:hidden"><div class="t" id="x159" style="left:1293.00px;top:671px;height:14px;font-size:14.5px;line-height:14.5px;color:#262626;font-family:'Liberation Sans',sans-serif;;left:3.00px;top:7px">0621-08924</div></div>
<div style="position:absolute;left:0;top:0;width:94.5px;height:28px;left:64.0px;top:691px;overflow:hidden"><div class="t" id="x160" style="left:67.00px;top:699px;height:14px;font-size:14.5px;line-height:14.5px;color:#262626;font-family:'Liberation Sans',sans-serif;;left:3.00px;top:8px">BLONP</div></div>
<div style="position:absolute;left:0;top:0;width:240.0px;height:28px;left:159.0px;top:691px;overflow:hidden"><div class="t" id="x161" style="left:162.00px;top:699px;height:14px;font-size:14.5px;line-height:14.5px;color:#262626;font-family:'Liberation Sans',sans-serif;;left:3.00px;top:8px">Blondesddsl père et fils</div></div>
<div style="position:absolute;left:0;top:0;width:129.5px;height:28px;left:399.5px;top:691px;overflow:hidden"><div class="t" id="x162" style="left:402.50px;top:699px;height:14px;font-size:14.5px;line-height:14.5px;color:#262626;font-family:'Liberation Sans',sans-serif;;left:3.00px;top:8px">Frédérique Citeaux</div></div>
<div style="position:absolute;left:0;top:0;width:144.5px;height:28px;left:529.5px;top:691px;overflow:hidden"><div class="t" id="x163" style="left:532.50px;top:699px;height:14px;font-size:14.5px;line-height:14.5px;color:#262626;font-family:'Liberation Sans',sans-serif;;left:3.00px;top:8px">Marketing Manager</div></div>
<div style="position:absolute;left:0;top:0;width:203.0px;height:28px;left:674.5px;top:691px;overflow:hidden"><div class="t" id="x164" style="left:677.50px;top:699px;height:14px;font-size:14.5px;line-height:14.5px;color:#262626;font-family:'Liberation Sans',sans-serif;;left:3.00px;top:8px">24, place Kléber</div></div>
<div style="position:absolute;left:0;top:0;width:81.5px;height:28px;left:878.0px;top:691px;overflow:hidden"><div class="t" id="x165" style="left:881.00px;top:699px;height:14px;font-size:14.5px;line-height:14.5px;color:#262626;font-family:'Liberation Sans',sans-serif;;left:3.00px;top:8px">Strasbourg</div></div>
<div style="position:absolute;left:0;top:0;width:91.5px;height:28px;left:1022.0px;top:691px;overflow:hidden"><div class="t" id="x166" style="left:1025.00px;top:699px;height:14px;font-size:14.5px;line-height:14.5px;color:#262626;font-family:'Liberation Sans',sans-serif;;left:3.00px;top:8px">67000</div></div>
<div style="position:absolute;left:0;top:0;width:69.5px;height:28px;left:1114.0px;top:691px;overflow:hidden"><div class="t" id="x167" style="left:1117.00px;top:699px;height:14px;font-size:14.5px;line-height:14.5px;color:#262626;font-family:'Liberation Sans',sans-serif;;left:3.00px;top:8px">France</div></div>
<div style="position:absolute;left:0;top:0;width:105.5px;height:28px;left:1184.0px;top:691px;overflow:hidden"><div class="t" id="x168" style="left:1187.00px;top:699px;height:14px;font-size:14.5px;line-height:14.5px;color:#262626;font-family:'Liberation Sans',sans-serif;;left:3.00px;top:8px">88.60.15.31</div></div>
<div style="position:absolute;left:0;top:0;width:106.0px;height:28px;left:1290.0px;top:691px;overflow:hidden"><div class="t" id="x169" style="left:1293.00px;top:699px;height:14px;font-size:14.5px;line-height:14.5px;color:#262626;font-family:'Liberation Sans',sans-serif;;left:3.00px;top:8px">88.60.15.32</div></div>
<div style="position:absolute;left:0;top:0;width:94.5px;height:27px;left:64.0px;top:719px;overflow:hidden"><div class="t" id="x170" style="left:67.00px;top:726px;height:14px;font-size:14.5px;line-height:14.5px;color:#262626;font-family:'Liberation Sans',sans-serif;;left:3.00px;top:7px">BOLID</div></div>
<div style="position:absolute;left:0;top:0;width:240.0px;height:27px;left:159.0px;top:719px;overflow:hidden"><div class="t" id="x171" style="left:162.00px;top:726px;height:14px;font-size:14.5px;line-height:14.5px;color:#262626;font-family:'Liberation Sans',sans-serif;;left:3.00px;top:7px">Bólido Comidas preparadas</div></div>
<div style="position:absolute;left:0;top:0;width:129.5px;height:27px;left:399.5px;top:719px;overflow:hidden"><div class="t" id="x172" style="left:402.50px;top:726px;height:14px;font-size:14.5px;line-height:14.5px;color:#262626;font-family:'Liberation Sans',sans-serif;;left:3.00px;top:7px">Martín Sommer</div></div>
<div style="position:absolute;left:0;top:0;width:144.5px;height:27px;left:529.5px;top:719px;overflow:hidden"><div class="t" id="x173" style="left:532.50px;top:726px;height:14px;font-size:14.5px;line-height:14.5px;color:#262626;font-family:'Liberation Sans',sans-serif;;left:3.00px;top:7px">Owner</div></div>
<div style="position:absolute;left:0;top:0;width:203.0px;height:27px;left:674.5px;top:719px;overflow:hidden"><div class="t" id="x174" style="left:677.50px;top:726px;height:14px;font-size:14.5px;line-height:14.5px;color:#262626;font-family:'Liberation Sans',sans-serif;;left:3.00px;top:7px">C/ Araquil, 67</div></div>
<div style="position:absolute;left:0;top:0;width:81.5px;height:27px;left:878.0px;top:719px;overflow:hidden"><div class="t" id="x175" style="left:881.00px;top:726px;height:14px;font-size:14.5px;line-height:14.5px;color:#262626;font-family:'Liberation Sans',sans-serif;;left:3.00px;top:7px">Madrid</div></div>
<div style="position:absolute;left:0;top:0;width:91.5px;height:27px;left:1022.0px;top:719px;overflow:hidden"><div class="t" id="x176" style="left:1025.00px;top:726px;height:14px;font-size:14.5px;line-height:14.5px;color:#262626;font-family:'Liberation Sans',sans-serif;;left:3.00px;top:7px">28023</div></div>
<div style="position:absolute;left:0;top:0;width:69.5px;height:27px;left:1114.0px;top:719px;overflow:hidden"><div class="t" id="x177" style="left:1117.00px;top:726px;height:14px;font-size:14.5px;line-height:14.5px;color:#262626;font-family:'Liberation Sans',sans-serif;;left:3.00px;top:7px">Spain</div></div>
<div style="position:absolute;left:0;top:0;width:105.5px;height:27px;left:1184.0px;top:719px;overflow:hidden"><div class="t" id="x178" style="left:1187.00px;top:726px;height:14px;font-size:14.5px;line-height:14.5px;color:#262626;font-family:'Liberation Sans',sans-serif;;left:3.00px;top:7px">(91) 555 22 82</div></div>
<div style="position:absolute;left:0;top:0;width:106.0px;height:27px;left:1290.0px;top:719px;overflow:hidden"><div class="t" id="x179" style="left:1293.00px;top:726px;height:14px;font-size:14.5px;line-height:14.5px;color:#262626;font-family:'Liberation Sans',sans-serif;;left:3.00px;top:7px">(91) 555 91 99</div></div>
<div style="position:absolute;left:0;top:0;width:94.5px;height:28px;left:64.0px;top:746px;overflow:hidden"><div class="t" id="x180" style="left:67.00px;top:754px;height:14px;font-size:14.5px;line-height:14.5px;color:#262626;font-family:'Liberation Sans',sans-serif;;left:3.00px;top:8px">BONAP</div></div>
<div style="position:absolute;left:0;top:0;width:240.0px;height:28px;left:159.0px;top:746px;overflow:hidden"><div class="t" id="x181" style="left:162.00px;top:754px;height:14px;font-size:14.5px;line-height:14.5px;color:#262626;font-family:'Liberation Sans',sans-serif;;left:3.00px;top:8px">Bon app&#x27;</div></div>
<div style="position:absolute;left:0;top:0;width:129.5px;height:28px;left:399.5px;top:746px;overflow:hidden"><div class="t" id="x182" style="left:402.50px;top:754px;height:14px;font-size:14.5px;line-height:14.5px;color:#262626;font-family:'Liberation Sans',sans-serif;;left:3.00px;top:8px">Laurence Lebihan</div></div>
<div style="position:absolute;left:0;top:0;width:144.5px;height:28px;left:529.5px;top:746px;overflow:hidden"><div class="t" id="x183" style="left:532.50px;top:754px;height:14px;font-size:14.5px;line-height:14.5px;color:#262626;font-family:'Liberation Sans',sans-serif;;left:3.00px;top:8px">Owner</div></div>
<div style="position:absolute;left:0;top:0;width:203.0px;height:28px;left:674.5px;top:746px;overflow:hidden"><div class="t" id="x184" style="left:677.50px;top:754px;height:14px;font-size:14.5px;line-height:14.5px;color:#262626;font-family:'Liberation Sans',sans-serif;;left:3.00px;top:8px">12, rue des Bouchers</div></div>
<div style="position:absolute;left:0;top:0;width:81.5px;height:28px;left:878.0px;top:746px;overflow:hidden"><div class="t" id="x185" style="left:881.00px;top:754px;height:14px;font-size:14.5px;line-height:14.5px;color:#262626;font-family:'Liberation Sans',sans-serif;;left:3.00px;top:8px">Marseille</div></div>
<div style="position:absolute;left:0;top:0;width:91.5px;height:28px;left:1022.0px;top:746px;overflow:hidden"><div class="t" id="x186" style="left:1025.00px;top:754px;height:14px;font-size:14.5px;line-height:14.5px;color:#262626;font-family:'Liberation Sans',sans-serif;;left:3.00px;top:8px">13008</div></div>
<div style="position:absolute;left:0;top:0;width:69.5px;height:28px;left:1114.0px;top:746px;overflow:hidden"><div class="t" id="x187" style="left:1117.00px;top:754px;height:14px;font-size:14.5px;line-height:14.5px;color:#262626;font-family:'Liberation Sans',sans-serif;;left:3.00px;top:8px">France</div></div>
<div style="position:absolute;left:0;top:0;width:105.5px;height:28px;left:1184.0px;top:746px;overflow:hidden"><div class="t" id="x188" style="left:1187.00px;top:754px;height:14px;font-size:14.5px;line-height:14.5px;color:#262626;font-family:'Liberation Sans',sans-serif;;left:3.00px;top:8px">91.24.45.40</div></div>
<div style="position:absolute;left:0;top:0;width:106.0px;height:28px;left:1290.0px;top:746px;overflow:hidden"><div class="t" id="x189" style="left:1293.00px;top:754px;height:14px;font-size:14.5px;line-height:14.5px;color:#262626;font-family:'Liberation Sans',sans-serif;;left:3.00px;top:8px">91.24.45.41</div></div>
<div style="position:absolute;left:0;top:0;width:94.5px;height:13px;left:64.0px;top:774px;overflow:hidden"><div class="t" id="x190" style="left:67.00px;top:781px;height:14px;font-size:14.5px;line-height:14.5px;color:#262626;font-family:'Liberation Sans',sans-serif;;left:3.00px;top:7px">BOTTM</div></div>
<div style="position:absolute;left:0;top:0;width:240.0px;height:13px;left:159.0px;top:774px;overflow:hidden"><div class="t" id="x191" style="left:162.00px;top:781px;height:14px;font-size:14.5px;line-height:14.5px;color:#262626;font-family:'Liberation Sans',sans-serif;;left:3.00px;top:7px">Bottom-Dollar Markets</div></div>
<div style="position:absolute;left:0;top:0;width:129.5px;height:13px;left:399.5px;top:774px;overflow:hidden"><div class="t" id="x192" style="left:402.50px;top:781px;height:14px;font-size:14.5px;line-height:14.5px;color:#262626;font-family:'Liberation Sans',sans-serif;;left:3.00px;top:7px">Elizabeth Lincoln</div></div>
<div style="position:absolute;left:0;top:0;width:144.5px;height:13px;left:529.5px;top:774px;overflow:hidden"><div class="t" id="x193" style="left:532.50px;top:781px;height:14px;font-size:14.5px;line-height:14.5px;color:#262626;font-family:'Liberation Sans',sans-serif;;left:3.00px;top:7px">Accounting Manager</div></div>
<div style="position:absolute;left:0;top:0;width:203.0px;height:13px;left:674.5px;top:774px;overflow:hidden"><div class="t" id="x194" style="left:677.50px;top:781px;height:14px;font-size:14.5px;line-height:14.5px;color:#262626;font-family:'Liberation Sans',sans-serif;;left:3.00px;top:7px">23 Tsawassen Blvd.</div></div>
<div style="position:absolute;left:0;top:0;width:81.5px;height:13px;left:878.0px;top:774px;overflow:hidden"><div class="t" id="x195" style="left:881.00px;top:781px;height:14px;font-size:14.5px;line-height:14.5px;color:#262626;font-family:'Liberation Sans',sans-serif;;left:3.00px;top:7px">Tsawassen</div></div>
<div style="position:absolute;left:0;top:0;width:61.5px;height:13px;left:960.0px;top:774px;overflow:hidden"><div class="t" id="x196" style="left:963.00px;top:781px;height:14px;font-size:14.5px;line-height:14.5px;color:#262626;font-family:'Liberation Sans',sans-serif;;left:3.00px;top:7px">BC</div></div>
<div style="position:absolute;left:0;top:0;width:91.5px;height:13px;left:1022.0px;top:774px;overflow:hidden"><div class="t" id="x197" style="left:1025.00px;top:781px;height:14px;font-size:14.5px;line-height:14.5px;color:#262626;font-family:'Liberation Sans',sans-serif;;left:3.00px;top:7px">T2F 8M4</div></div>
<div style="position:absolute;left:0;top:0;width:69.5px;height:13px;left:1114.0px;top:774px;overflow:hidden"><div class="t" id="x198" style="left:1117.00px;top:781px;height:14px;font-size:14.5px;line-height:14.5px;color:#262626;font-family:'Liberation Sans',sans-serif;;left:3.00px;top:7px">Canada</div></div>
<div style="position:absolute;left:0;top:0;width:105.5px;height:13px;left:1184.0px;top:774px;overflow:hidden"><div class="t" id="x199" style="left:1187.00px;top:781px;height:14px;font-size:14.5px;line-height:14.5px;color:#262626;font-family:'Liberation Sans',sans-serif;;left:3.00px;top:7px">(604) 555-4729</div></div>
<div style="position:absolute;left:0;top:0;width:106.0px;height:13px;left:1290.0px;top:774px;overflow:hidden"><div class="t" id="x200" style="left:1293.00px;top:781px;height:14px;font-size:14.5px;line-height:14.5px;color:#262626;font-family:'Liberation Sans',sans-serif;;left:3.00px;top:7px">(604) 555-3745</div></div>
<svg style="position:absolute;left:1401px;top:532px" width="14" height="9" viewBox="0 0 14 9"><path d="M1.5 7.5 L7 2 L12.5 7.5" stroke="#6e6e6e" stroke-width="1.5" fill="none"/></svg>
<div style="position:absolute;left:1405px;top:547px;width:6px;height:22px;background:#c5c6ca;border-radius:3px"></div>
<svg style="position:absolute;left:1401px;top:772px" width="14" height="9" viewBox="0 0 14 9"><path d="M1.5 1.5 L7 7 L12.5 1.5" stroke="#6e6e6e" stroke-width="1.5" fill="none"/></svg>
<div class="t" id="x201" style="left:9.20px;top:827px;height:15px;font-size:15.5px;line-height:15.5px;color:#262626;font-family:'Liberation Sans',sans-serif;transform:scaleX(0.9567);transform-origin:0 0;">Query Batch Completed</div>
<div class="t" id="x202" style="left:187.00px;top:827px;height:15px;font-size:15.5px;line-height:15.5px;color:#262626;font-family:'Liberation Sans',sans-serif;transform:scaleX(0.9375);transform-origin:0 0;">91</div>
<div class="t" id="x203" style="left:224.40px;top:827px;height:15px;font-size:15.5px;line-height:15.5px;color:#262626;font-family:'Liberation Sans',sans-serif;transform:scaleX(0.8988);transform-origin:0 0;">00:00:00.23</div>
<div class="t" id="x204" style="left:317.40px;top:827px;height:15px;font-size:15.5px;line-height:15.5px;color:#262626;font-family:'Liberation Sans',sans-serif;transform:scaleX(0.9152);transform-origin:0 0;">SQL Server</div>
<div class="t" id="x205" style="left:430.00px;top:827px;height:15px;font-size:15.5px;line-height:15.5px;color:#262626;font-family:'Liberation Sans',sans-serif;transform:scaleX(0.8500);transform-origin:0 0;">sa</div>
<div class="t" id="x206" style="left:465.20px;top:827px;height:15px;font-size:15.5px;line-height:15.5px;color:#262626;font-family:'Liberation Sans',sans-serif;transform:scaleX(0.8800);transform-origin:0 0;">ASTLAP386</div>
<div class="t" id="x207" style="left:579.20px;top:827px;height:15px;font-size:15.5px;line-height:15.5px;color:#262626;font-family:'Liberation Sans',sans-serif;transform:scaleX(0.9275);transform-origin:0 0;">NORTHWND</div>
<div class="t" id="x208" style="left:684.60px;top:827px;height:15px;font-size:15.5px;line-height:15.5px;color:#262626;font-family:'Liberation Sans',sans-serif;transform:scaleX(0.9275);transform-origin:0 0;">Ln 13 Col 1</div>
</body></html>
